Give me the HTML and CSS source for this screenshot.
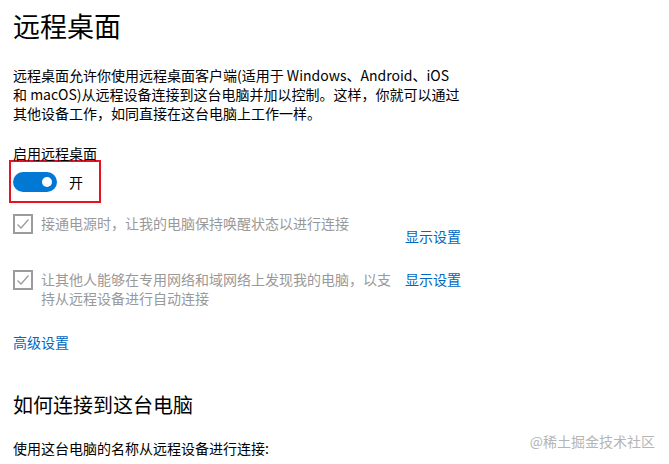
FILE: index.html
```html
<!DOCTYPE html>
<html lang="zh-CN">
<head>
  <meta charset="utf-8">
  <title>远程桌面</title>
  <link rel="stylesheet" href="styles.css">
</head>
<body>
  <h1 class="titulo">远程桌面</h1>
  <p class="desc">远程桌面允许你使用远程桌面客户端(适用于 Windows、Android、iOS<br>和 macOS)从远程设备连接到这台电脑并加以控制。这样，你就可以通过<br>其他设备工作，如同直接在这台电脑上工作一样。</p>

  <div class="label">启用远程桌面</div>
  <div class="marco">
    <span class="toggle"><span class="bola"></span></span>
    <span class="estado">开</span>
  </div>

  <div class="fila">
    <span class="check">
      <svg width="20" height="20" viewBox="0 0 20 20"><rect x="1" y="1" width="18" height="18" fill="none" stroke="#9b9b9b" stroke-width="2"/><path d="M4.5 10.5 L8 14 L15.5 5.5" fill="none" stroke="#9b9b9b" stroke-width="1.3"/></svg>
    </span>
    <span class="texto">接通电源时，让我的电脑保持唤醒状态以进行连接</span>
    <a href="#" class="link link-bajo">显示设置</a>
  </div>

  <div class="fila">
    <span class="check">
      <svg width="20" height="20" viewBox="0 0 20 20"><rect x="1" y="1" width="18" height="18" fill="none" stroke="#9b9b9b" stroke-width="2"/><path d="M4.5 10.5 L8 14 L15.5 5.5" fill="none" stroke="#9b9b9b" stroke-width="1.3"/></svg>
    </span>
    <span class="texto">让其他人能够在专用网络和域网络上发现我的电脑，以支持从远程设备进行自动连接</span>
    <a href="#" class="link">显示设置</a>
  </div>

  <a href="#" class="link avanzado">高级设置</a>

  <h2 class="subtitulo">如何连接到这台电脑</h2>
  <p class="desc">使用这台电脑的名称从远程设备进行连接:</p>

  <div class="marca">@稀土掘金技术社区</div>
</body>
</html>
```

FILE: styles.css
```css
*{
  margin: 0;
  padding: 0;
  box-sizing: border-box;
  font-family: "Noto Sans CJK SC", "Noto Sans", sans-serif;
}

body{
  background: white;
  color: #000;
  padding: 0 13px;
  font-size: 14px;
  position: relative;
  height: 464px;
  overflow: hidden;
}

a{
  text-decoration: none;
  display: inline-block;
}

.titulo{
  font-size: 27px;
  font-weight: 400;
  line-height: 36px;
  margin-top: 8px;
}

.desc{
  width: 470px;
  line-height: 19px;
  margin-top: 22px;
}

.label{
  margin-top: 21px;
  line-height: 19px;
}

.marco{
  margin-left: -4px;
  margin-top: -3px;
  width: 92px;
  height: 43px;
  border: 2px solid #e81123;
  display: flex;
  align-items: center;
  padding-left: 2px;
  gap: 12px;
}

.toggle{
  width: 44px;
  height: 20px;
  border-radius: 10px;
  background: #0078d4;
  display: flex;
  align-items: center;
  justify-content: flex-end;
  padding-right: 5px;
}

.bola{
  width: 10px;
  height: 10px;
  border-radius: 50%;
  background: white;
}

.estado{
  font-size: 14px;
}

.fila{
  display: flex;
  align-items: flex-start;
  margin-top: 11px;
}

.fila + .fila{
  margin-top: 24px;
}

.check{
  width: 20px;
  height: 20px;
  flex: none;
}

.check svg{
  display: block;
}

.texto{
  color: #999;
  width: 352px;
  margin-left: 8px;
  margin-right: 12px;
  line-height: 19px;
}

.link{
  color: #0067c0;
  line-height: 19px;
}

.link-bajo{
  margin-top: 13px;
}

.avanzado{
  margin-top: 25px;
  display: block;
}

.subtitulo{
  font-size: 20px;
  font-weight: 400;
  line-height: 28px;
  margin-top: 39px;
}

.subtitulo + .desc{
  margin-top: 20px;
}

.marca{
  position: absolute;
  right: 14px;
  top: 431px;
  color: #b5b5b5;
  font-size: 14px;
}
```
